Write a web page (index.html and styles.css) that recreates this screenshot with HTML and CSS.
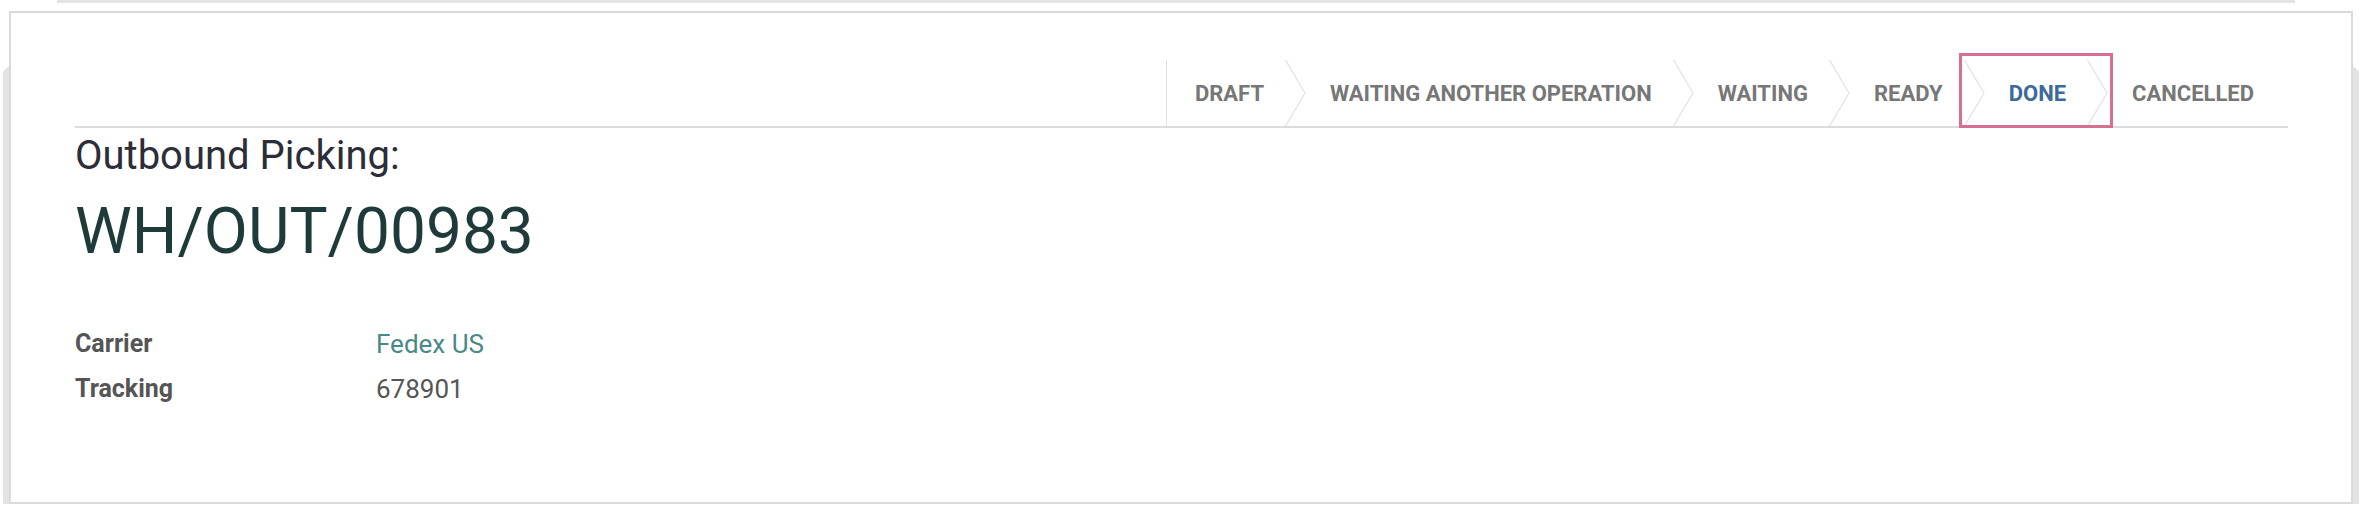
FILE: index.html
```html
<!DOCTYPE html>
<html lang="en">
<head>
  <meta charset="UTF-8">
  <title>WH/OUT/00983</title>
  <link rel="stylesheet" href="styles.css">
</head>
<body>
  <div class="prev-sheet"></div>
  <div class="sheet">
    <div class="statusbar">
      <div class="stages">
        <span class="stage first">DRAFT</span>
        <svg class="chev" viewBox="0 0 21 66"><polyline points="0.5,0 20,33 0.5,66"/></svg>
        <span class="stage">WAITING ANOTHER OPERATION</span>
        <svg class="chev" viewBox="0 0 21 66"><polyline points="0.5,0 20,33 0.5,66"/></svg>
        <span class="stage">WAITING</span>
        <svg class="chev" viewBox="0 0 21 66"><polyline points="0.5,0 20,33 0.5,66"/></svg>
        <span class="stage">READY</span>
        <svg class="chev" viewBox="0 0 21 66"><polyline points="0.5,0 20,33 0.5,66"/></svg>
        <span class="stage current">DONE</span>
        <svg class="chev" viewBox="0 0 21 66"><polyline points="0.5,0 20,33 0.5,66"/></svg>
        <span class="stage last">CANCELLED</span>
      </div>
    </div>

    <div class="title">
      <div class="doc-type">Outbound Picking:</div>
      <h1 class="doc-name">WH/OUT/00983</h1>
    </div>

    <table class="fields">
      <tr>
        <td class="label">Carrier</td>
        <td class="value"><a class="link" href="#">Fedex US</a></td>
      </tr>
      <tr>
        <td class="label">Tracking</td>
        <td class="value">678901</td>
      </tr>
    </table>
  </div>
</body>
</html>
```

FILE: styles.css
```css
body {
  margin: 0;
  background: #fff;
  font-family: Roboto, "Liberation Sans", sans-serif;
}
.prev-sheet {
  height: 3px;
  margin: 0 71px 0 57px;
  background: #e4e4e4;
}
.sheet {
  position: relative;
  box-sizing: border-box;
  height: 493px;
  margin: 8px 13px 0 9px;
  padding: 47px 63px 0 64px;
  border: 2px solid #dadada;
  background: #fff;
}
/* curled shadow under the sheet */
.sheet::before {
  content: "";
  position: absolute;
  top: 48px; left: -8px; right: -8px; bottom: -10px;
  background: #e3e3e3;
  border-radius: 40px 40px 30px 30px / 12px 12px 10px 10px;
  z-index: -1;
}

.statusbar {
  display: flex;
  justify-content: flex-end;
  height: 66px;
  border-bottom: 2px solid #dcdcdc;
}
.stages {
  display: flex;
  border-left: 1px solid #e3e3e3;
}
.stage {
  position: relative;
  display: flex;
  align-items: center;
  padding: 0 21px 0 24px;
  font-size: 22px;
  font-weight: 700;
  color: #777;
}
.stage.first { padding-left: 28px; }
.stage.last { padding-right: 34px; }
.stage.current { color: #3b6a9b; }
.stage.current::before {
  content: "";
  position: absolute;
  top: -7px; bottom: -2px; left: -26px; right: -26px;
  border: 3px solid #d5708f;
}
.chev {
  display: block;
  width: 21px;
  height: 66px;
}
.chev polyline {
  fill: none;
  stroke: #e4e4e4;
  stroke-width: 1.3;
}

.doc-type {
  margin-top: 3px;
  font-size: 40px;
  line-height: 49px;
  color: #2b2d38;
}
.doc-name {
  margin: 13px 0 0;
  font-size: 64px;
  font-weight: 400;
  line-height: 78px;
  color: #1f3b39;
}

.fields {
  margin-top: 50px;
  border-collapse: collapse;
  font-size: 25px;
  color: #555;
}
.fields td {
  padding: 0;
  height: 45px;
}
.fields td.label {
  width: 301px;
  font-weight: 700;
}
.fields td.value {
  font-size: 26px;
}
.link {
  color: #4a8a86;
  text-decoration: none;
}
```
